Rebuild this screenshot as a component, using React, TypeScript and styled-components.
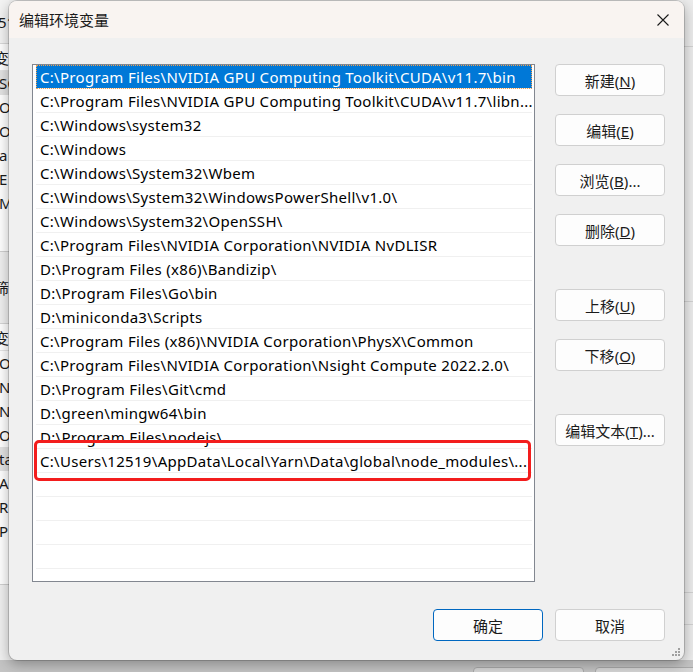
import React from "react";
import styled, { createGlobalStyle } from "styled-components";

const GlobalStyle = createGlobalStyle`
  html, body {
    margin: 0;
    padding: 0;
    background: #c8c8c8;
  }
  body {
    font-family: "Noto Sans", "Noto Sans CJK SC", sans-serif;
  }
`;

const UI_FONT = `"Noto Sans", "Noto Sans CJK SC", sans-serif`;

const PATHS = [
  "C:\\Program Files\\NVIDIA GPU Computing Toolkit\\CUDA\\v11.7\\bin",
  "C:\\Program Files\\NVIDIA GPU Computing Toolkit\\CUDA\\v11.7\\libn...",
  "C:\\Windows\\system32",
  "C:\\Windows",
  "C:\\Windows\\System32\\Wbem",
  "C:\\Windows\\System32\\WindowsPowerShell\\v1.0\\",
  "C:\\Windows\\System32\\OpenSSH\\",
  "C:\\Program Files\\NVIDIA Corporation\\NVIDIA NvDLISR",
  "D:\\Program Files (x86)\\Bandizip\\",
  "D:\\Program Files\\Go\\bin",
  "D:\\miniconda3\\Scripts",
  "C:\\Program Files (x86)\\NVIDIA Corporation\\PhysX\\Common",
  "C:\\Program Files\\NVIDIA Corporation\\Nsight Compute 2022.2.0\\",
  "D:\\Program Files\\Git\\cmd",
  "D:\\green\\mingw64\\bin",
  "D:\\Program Files\\nodejs\\",
  "C:\\Users\\12519\\AppData\\Local\\Yarn\\Data\\global\\node_modules\\...",
];
const EMPTY_ROWS = 4;

// edges of the environment-variables window that peek out behind the dialog
const USER_VARS = ["SC", "Or", "Or", "a", "E", "M"];
const SYS_VARS = ["Or", "NU", "NV", "OS", "ta", "A", "R", "P"];

const Desktop = styled.div`
  position: relative;
  width: 693px;
  height: 672px;
  overflow: hidden;
  background: #c4c4c4;
`;

const BackWindow = styled.div`
  position: absolute;
  inset: 0 0 12px 0;
  display: flex;
  justify-content: space-between;
  background: #f0f0f0;
  font-family: ${UI_FONT};
  font-size: 15px;
  color: #1a1a1a;
`;

const BackLeft = styled.div`
  width: 9px;
  display: flex;
  flex-direction: column;
`;

const BackHeader = styled.div`
  height: 43px;
  display: flex;
  align-items: center;
  background: #f3f3f3;
  border-bottom: 1px solid #d9d9d9;
  white-space: nowrap;
  text-indent: -2px;
`;

const BackList = styled.div<{ $height: number }>`
  height: ${(p) => p.$height}px;
  background: #fff;
  display: flex;
  flex-direction: column;
  border-bottom: 1px solid #d0d0d0;
`;

const BackColumnHead = styled.div`
  height: 26px;
  display: flex;
  align-items: center;
  white-space: nowrap;
  text-indent: -6px;
  border-bottom: 1px solid #e5e5e5;
`;

const BackRow = styled.div<{ $hl?: boolean }>`
  height: 24px;
  display: flex;
  align-items: center;
  white-space: nowrap;
  text-indent: -1px;
  background: ${(p) => (p.$hl ? "#e3e3e3" : "transparent")};
`;

const BackGap = styled.div<{ $h: number }>`
  height: ${(p) => p.$h}px;
  display: flex;
  align-items: center;
  white-space: nowrap;
  text-indent: -6px;
  border-bottom: 1px solid #d5d5d5;
`;

const BackRight = styled.div`
  width: 10px;
  display: flex;
  flex-direction: column;
  background: #ececec;
`;

const BackLine = styled.div<{ $h: number }>`
  height: ${(p) => p.$h}px;
  border-bottom: 1px solid #d2d2d2;
`;

const BackButtons = styled.div`
  position: absolute;
  left: 473px;
  top: 667px;
  display: flex;
  gap: 11px;
`;

const BackButton = styled.div`
  width: 109px;
  height: 30px;
  border: 1px solid #a9a9a9;
  border-radius: 4px;
  background: #d6d6d6;
`;

const Dialog = styled.div`
  position: absolute;
  left: 9px;
  top: 1px;
  width: 675px;
  height: 659px;
  display: flex;
  flex-direction: column;
  background: #f0f0f0;
  border-radius: 8px;
  overflow: hidden;
  box-shadow: 0 0 0 1px rgba(0, 0, 0, 0.16), 0 4px 14px rgba(0, 0, 0, 0.32);
  font-family: ${UI_FONT};
  color: #000;
`;

const TitleBar = styled.div`
  height: 37px;
  flex: none;
  display: flex;
  align-items: center;
  justify-content: space-between;
  padding: 0 15px 0 10px;
  background: #f9f4f1;
  font-size: 15px;
  color: #1a1a1a;
`;

const CloseIcon = () => (
  <svg width="12" height="12" viewBox="0 0 12 12">
    <path d="M0.5 0.5 L11.5 11.5 M11.5 0.5 L0.5 11.5" stroke="#1a1a1a" strokeWidth="1.1" />
  </svg>
);

const Body = styled.div`
  position: relative;
  flex: 1;
  display: flex;
  flex-direction: column;
  padding: 26px 19px 0 23px;
`;

const MainRow = styled.div`
  display: flex;
  gap: 20px;
`;

const ListBox = styled.div`
  width: 503px;
  height: 518px;
  box-sizing: border-box;
  border: 1px solid #828790;
  background: #fff;
  overflow: hidden;
  display: flex;
  flex-direction: column;
`;

const Row = styled.div<{ $selected?: boolean }>`
  height: 24px;
  flex: none;
  box-sizing: border-box;
  margin: 0 2px 0 3px;
  padding-left: 4px;
  display: flex;
  align-items: center;
  white-space: nowrap;
  overflow: hidden;
  font-size: 15px;
  letter-spacing: 0.3px;
  border-bottom: 1px solid #f0f0f0;
  background: ${(p) => (p.$selected ? "#0078d7" : "#fff")};
  color: ${(p) => (p.$selected ? "#fff" : "#000")};
  outline: ${(p) => (p.$selected ? "1px dotted #f0a050" : "none")};
  outline-offset: -1px;
`;

const ButtonColumn = styled.div`
  display: flex;
  flex-direction: column;
  gap: 43px;
`;

const ButtonGroup = styled.div`
  display: flex;
  flex-direction: column;
  gap: 18px;
`;

const Footer = styled.div`
  display: flex;
  justify-content: flex-end;
  gap: 12px;
  margin-top: 27px;
`;

const Button = styled.button<{ $primary?: boolean }>`
  width: 110px;
  height: 32px;
  box-sizing: border-box;
  padding: 0;
  border: 1px solid ${(p) => (p.$primary ? "#0067c0" : "#d0d0d0")};
  border-radius: 4px;
  background: #fdfdfd;
  font-family: ${UI_FONT};
  font-size: 15px;
  color: #1b1b1b;
  display: flex;
  align-items: center;
  justify-content: center;
  white-space: nowrap;
`;

// red marker drawn around the newly added path entry
const Highlight = styled.div`
  position: absolute;
  left: 25px;
  top: 402px;
  width: 497px;
  height: 41px;
  box-sizing: border-box;
  border: 3px solid #f31d1d;
  border-radius: 5px;
  pointer-events: none;
`;

const Label = ({ text, hot, tail = "" }: { text: string; hot: string; tail?: string }) => (
  <span>
    {text}(<u>{hot}</u>){tail}
  </span>
);

const GripDot = styled.span`
  width: 2px;
  height: 2px;
  background: #a0a0a0;
`;

const GripBox = styled.div`
  position: absolute;
  right: 4px;
  bottom: 4px;
  display: grid;
  grid-template-columns: repeat(3, 2px);
  grid-template-rows: repeat(3, 2px);
  gap: 1px;
`;

function Grip() {
  const cells = [2, 4, 5, 6, 7, 8];
  return (
    <GripBox>
      {Array.from({ length: 9 }, (_, i) =>
        cells.includes(i) ? <GripDot key={i} /> : <span key={i} />
      )}
    </GripBox>
  );
}

export default function App() {
  return (
    <>
      <GlobalStyle />
      <Desktop>
        <BackWindow>
          <BackLeft>
            <BackHeader>51</BackHeader>
            <BackList $height={207}>
              <BackColumnHead>变</BackColumnHead>
              {USER_VARS.map((v, i) => (
                <BackRow key={"u" + i} $hl={i === 0}>
                  {v}
                </BackRow>
              ))}
            </BackList>
            <BackGap $h={71}>筛</BackGap>
            <BackList $height={260}>
              <BackColumnHead>变</BackColumnHead>
              {SYS_VARS.map((v, i) => (
                <BackRow key={"s" + i} $hl={i === 4}>
                  {v}
                </BackRow>
              ))}
            </BackList>
          </BackLeft>
          <BackRight>
            <BackLine $h={46} />
            <BackLine $h={254} />
            <BackLine $h={290} />
            <BackLine $h={31} />
          </BackRight>
        </BackWindow>
        <BackButtons>
          <BackButton />
          <BackButton />
        </BackButtons>

        <Dialog>
          <TitleBar>
            <span>编辑环境变量</span>
            <CloseIcon />
          </TitleBar>
          <Body>
            <MainRow>
              <ListBox>
                {PATHS.map((p, i) => (
                  <Row key={p} $selected={i === 0}>
                    {p}
                  </Row>
                ))}
                {Array.from({ length: EMPTY_ROWS }, (_, i) => (
                  <Row key={"empty-" + i} />
                ))}
              </ListBox>
              <ButtonColumn>
                <ButtonGroup>
                  <Button>
                    <Label text="新建" hot="N" />
                  </Button>
                  <Button>
                    <Label text="编辑" hot="E" />
                  </Button>
                  <Button>
                    <Label text="浏览" hot="B" tail="..." />
                  </Button>
                  <Button>
                    <Label text="删除" hot="D" />
                  </Button>
                </ButtonGroup>
                <ButtonGroup>
                  <Button>
                    <Label text="上移" hot="U" />
                  </Button>
                  <Button>
                    <Label text="下移" hot="O" />
                  </Button>
                </ButtonGroup>
                <ButtonGroup>
                  <Button>
                    <Label text="编辑文本" hot="T" tail="..." />
                  </Button>
                </ButtonGroup>
              </ButtonColumn>
            </MainRow>
            <Footer>
              <Button $primary>确定</Button>
              <Button>取消</Button>
            </Footer>
            <Highlight />
          </Body>
          <Grip />
        </Dialog>
      </Desktop>
    </>
  );
}
